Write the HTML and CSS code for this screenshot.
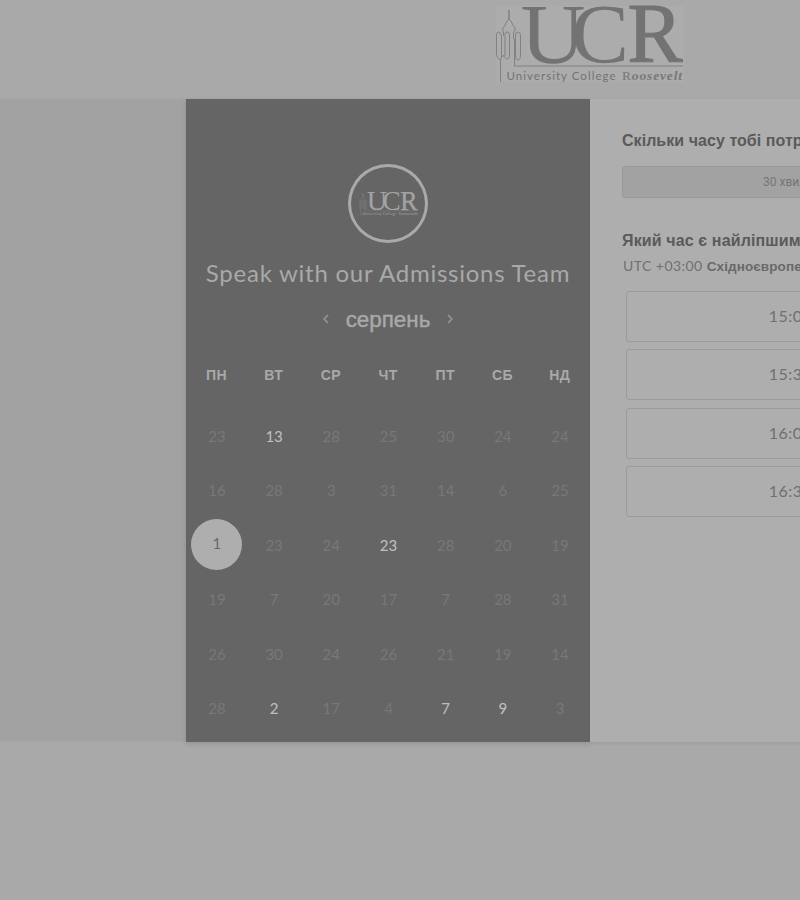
FILE: index.html
```
<!DOCTYPE html>
<html lang="uk">
<head>
<meta charset="utf-8">
<title>Speak with our Admissions Team</title>
<link rel="stylesheet" href="styles.css">
</head>
<body>
<header class="top">
<svg class="logo" viewBox="496 6 188 76" role="img" aria-label="University College Roosevelt">
<defs>
<g id="mark">
<g class="letters">
<text x="520.500" y="62.500" textLength="65" lengthAdjust="spacingAndGlyphs">U</text>
<text x="571" y="62.500" textLength="58" lengthAdjust="spacingAndGlyphs">C</text>
<text class="heavy" x="627.500" y="62" textLength="55" lengthAdjust="spacingAndGlyphs">R</text>
</g>
<g class="tower">
<path d="M500.500 82V60q-4-2-4-6V35q0-3 2-3t3 4v20q0 3-1 4M501.500 56q2 1 3.500-1V34q1-3 3-2t1.500 4v20q-1 4-3 3t-3-4M515.500 57V35q0-3 2.500-3t2.500 4v18q0 6-2.500 6t-2.500-4"/>
<path d="M503.500 36v-3l-1-4q3-4 4.500-8l2-2v-9 9l2 2q1.500 4 4.500 8l-2 4v6m1 0v27H683"/>
</g>
<text class="tag" x="506.500" y="79.800" textLength="109" lengthAdjust="spacing">University College</text>
<text class="script" x="622" y="79.800" textLength="60" lengthAdjust="spacing"><tspan class="upright">R</tspan>oosevelt</text>
</g>
</defs>
<rect class="plate" x="496" y="6" width="188" height="76"/>
<use href="#mark"/>
</svg>
</header>
<main class="stage">
<section class="calendar">
<div class="avatar"><svg class="mini" viewBox="496 6 188 76"><use href="#mark"/></svg></div>
<h1 class="title">Speak with our Admissions Team</h1>
<div class="month">
<svg class="arrow" viewBox="0 0 8 10"><path d="M6 1 2 5l4 4"/></svg>
<span class="month-name">серпень</span>
<svg class="arrow" viewBox="0 0 8 10"><path d="m2 1 4 4-4 4"/></svg>
</div>
<div class="weekdays"><span>ПН</span><span>ВТ</span><span>СР</span><span>ЧТ</span><span>ПТ</span><span>СБ</span><span>НД</span></div>
<div class="days">
<span>23</span><span class="open">13</span><span>28</span><span>25</span><span>30</span><span>24</span><span>24</span>
<span>16</span><span>28</span><span>3</span><span>31</span><span>14</span><span>6</span><span>25</span>
<span class="selected">1</span><span>23</span><span>24</span><span class="open">23</span><span>28</span><span>20</span><span>19</span>
<span>19</span><span>7</span><span>20</span><span>17</span><span>7</span><span>28</span><span>31</span>
<span>26</span><span>30</span><span>24</span><span>26</span><span>21</span><span>19</span><span>14</span>
<span>28</span><span class="open">2</span><span>17</span><span>4</span><span class="open">7</span><span class="open">9</span><span>3</span>
</div>
</section>
<section class="booking">
<h2>Скільки часу тобі потрібно?</h2>
<div class="duration">30 хвилин</div>
<h2 class="when">Який час є найліпшим для тебе?</h2>
<p class="zone">UTC +03:00 <b>Східноєвропейський час</b></p>
<div class="slots"><div class="slot">15:00</div><div class="slot">15:30</div><div class="slot">16:00</div><div class="slot">16:30</div></div>
</section>
</main>
</body>
</html>
```
FILE: styles.css
```
* { box-sizing: border-box; }
body { margin: 0; height: 900px; overflow: hidden; background: #a9a9a9; font-family: Lato, "Liberation Sans", sans-serif; }
.top { height: 98px; padding: 6px 0 0 496px; }
.logo { display: block; width: 188px; height: 76px; overflow: visible; color: #737373; }
.plate { fill: #acacac; }
.letters { font: 84px "Liberation Serif", serif; fill: currentColor; }
.heavy { stroke: currentColor; stroke-width: 1.2px; }
.tower { fill: none; stroke: currentColor; stroke-width: 1px; opacity: .75; }
.tag { font: 11.5px Lato, sans-serif; fill: currentColor; }
.script { font: italic bold 13.5px "Liberation Serif", serif; fill: currentColor; opacity: .9; }
.upright { font-style: normal; font-weight: 400; }
.stage { display: flex; height: 644px; padding-left: 186px; background: #a2a2a2; border-top: 1px solid #a6a6a6; border-bottom: 1px solid #a5a5a5; }
.calendar { flex: none; width: 404px; height: 643px; padding: 65px 2px 0; background: #656565; color: #a9a9a9; box-shadow: 0 2px 5px rgba(0,0,0,.13); }
.avatar { display: flex; align-items: center; justify-content: center; width: 80px; height: 79px; margin: 0 auto; border: 3px solid #aaa; border-radius: 50%; }
.mini { width: 59px; height: 24px; color: #a3a3a3; }
.title { margin: 14px 0 0; font-size: 24px; line-height: 32px; font-weight: 400; letter-spacing: .75px; text-align: center; white-space: nowrap; }
.month { display: flex; align-items: center; justify-content: center; gap: 16px; height: 28px; margin-top: 17px; }
.month-name { font: 22.4px/28px "Liberation Sans", sans-serif; -webkit-text-stroke: .4px currentColor; }
.arrow { width: 8px; height: 10px; margin-bottom: 3px; fill: none; stroke: #8e8e8e; stroke-width: 1.8px; }
.weekdays, .days { display: grid; grid-template-columns: repeat(7, 57.2px); justify-content: center; text-align: center; }
.weekdays { margin-top: 31px; font: bold 14px/20px "Liberation Sans", sans-serif; letter-spacing: .3px; }
.days { grid-auto-rows: 54.4px; margin-top: 24px; padding-left: 1px; font-size: 15px; line-height: 54.4px; color: #787878; }
.open { color: #c0c0c0; }
.selected { width: 51px; height: 51px; margin: 1px 0 0 3px; border-radius: 50%; line-height: 49px; background: #aeaeae; color: #686868; }
.booking { flex: none; width: 404px; height: 643px; padding: 32px 33px 0 32px; background: #aeaeae; color: #707070; box-shadow: 0 2px 3px rgba(0,0,0,.06); }
h2 { margin: 0; color: #5a5a5a; font: bold 16px/20px "Liberation Sans", sans-serif; letter-spacing: .05px; white-space: nowrap; }
.when { position: relative; top: 1px; letter-spacing: .13px; }
.duration { height: 32px; margin: 15px 0 32px; border: 1px solid #999; border-radius: 3px; background: #a2a2a2; text-align: center; font: 12px/30px Roboto, sans-serif; color: #757575; }
.zone { margin: 6px 0 0 1px; font-size: 14px; line-height: 20px; letter-spacing: .45px; white-space: nowrap; }
.zone b { font: bold 13.5px "Liberation Sans", sans-serif; letter-spacing: .1px; color: #696969; }
.slots { display: grid; gap: 7.4px; margin: 15px 6px 0 4px; }
.slot { height: 51px; border: 1px solid #9b9b9b; border-radius: 3px; text-align: center; font-size: 16px; line-height: 47px; letter-spacing: .5px; }
```
